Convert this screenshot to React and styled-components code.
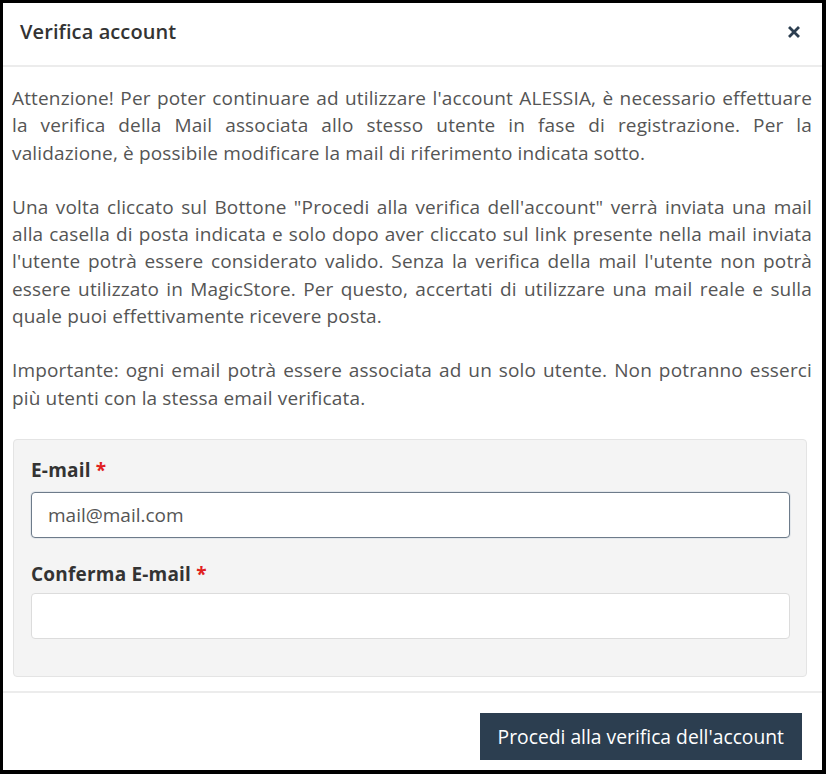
import React from "react";
import styled, { createGlobalStyle } from "styled-components";

const GlobalStyle = createGlobalStyle`
  html, body {
    margin: 0;
    padding: 0;
    background: #000;
  }
  body {
    font-family: "Open Sans", "Liberation Sans", sans-serif;
  }
`;

const Frame = styled.div`
  box-sizing: border-box;
  width: 826px;
  height: 774px;
  border: 3px solid #000;
  border-right-width: 4px;
  border-bottom-width: 4px;
  background: #fff;
  display: flex;
  flex-direction: column;
`;

const Header = styled.div`
  box-sizing: border-box;
  display: flex;
  align-items: center;
  justify-content: space-between;
  height: 64px;
  padding: 0 22px 5px 17px;
  border-bottom: 2px solid #ececec;
`;

const Title = styled.h4`
  margin: 0;
  font-size: 20px;
  font-weight: 600;
  letter-spacing: 0.1px;
  color: #333;
`;

const Close = styled.button`
  border: 0;
  background: none;
  padding: 0;
  display: flex;
  cursor: pointer;
`;

const Body = styled.div`
  padding: 18px 10px 0 9px;
`;

const Text = styled.p`
  margin: 0 0 27px;
  font-size: 19px;
  line-height: 27.3px;
  color: #555;
  text-align: justify;
  letter-spacing: 0.15px;
`;

const Panel = styled.div`
  margin: 1px 5px 0 1px;
  background: #f4f4f4;
  border: 1px solid #e4e4e4;
  border-radius: 4px;
  padding: 17px 16px 37px 17px;
`;

const Field = styled.div`
  display: flex;
  flex-direction: column;
  gap: ${(p) => (p.$last ? "6px" : "9px")};
  margin-bottom: ${(p) => (p.$last ? "0" : "23px")};
`;

const Label = styled.label`
  font-size: 19px;
  line-height: 26px;
  font-weight: 700;
  color: #333;
  letter-spacing: 0.2px;
  span {
    color: #e02020;
  }
`;

const Input = styled.input`
  box-sizing: border-box;
  height: 46px;
  width: 100%;
  border: 1px solid ${(p) => (p.$focused ? "#6d7b8a" : "#dcdcdc")};
  box-shadow: ${(p) => (p.$focused ? "0 0 0 1px #e3e7eb" : "none")};
  border-radius: 4px;
  padding: 0 16px;
  font-family: "Open Sans", "Liberation Sans", sans-serif;
  font-size: 19px;
  color: #555;
  caret-color: #222;
  background: #fff;
  outline: none;
`;

const Footer = styled.div`
  margin-top: 14px;
  border-top: 2px solid #ececec;
  display: flex;
  justify-content: flex-end;
  padding: 20px 20px 0 0;
`;

const PrimaryButton = styled.button`
  height: 47px;
  padding: 0 18px;
  border: 0;
  background: #2c3e50;
  color: #fff;
  font-family: "Open Sans", "Liberation Sans", sans-serif;
  font-size: 19.3px;
  cursor: pointer;
`;

export default function App() {
  return (
    <>
      <GlobalStyle />
      <Frame>
        <Header>
          <Title>Verifica account</Title>
          <Close aria-label="Chiudi">
            <svg width="12" height="12" viewBox="0 0 12 12">
              <path
                d="M2 2 L10 10 M10 2 L2 10"
                stroke="#2c3e50"
                strokeWidth="2.8"
                strokeLinecap="square"
              />
            </svg>
          </Close>
        </Header>
        <Body>
          <Text>
            Attenzione! Per poter continuare ad utilizzare l'account ALESSIA, è
            necessario effettuare la verifica della Mail associata allo stesso
            utente in fase di registrazione. Per la validazione, è possibile
            modificare la mail di riferimento indicata sotto.
          </Text>
          <Text>
            Una volta cliccato sul Bottone "Procedi alla verifica dell'account"
            verrà inviata una mail alla casella di posta indicata e solo dopo
            aver cliccato sul link presente nella mail inviata l'utente potrà
            essere considerato valido. Senza la verifica della mail l'utente non
            potrà essere utilizzato in MagicStore. Per questo, accertati di
            utilizzare una mail reale e sulla quale puoi effettivamente ricevere
            posta.
          </Text>
          <Text>
            Importante: ogni email potrà essere associata ad un solo utente. Non
            potranno esserci più utenti con la stessa email verificata.
          </Text>
          <Panel>
            <Field>
              <Label>
                E-mail <span>*</span>
              </Label>
              <Input $focused autoFocus defaultValue="mail@mail.com" />
            </Field>
            <Field $last>
              <Label>
                Conferma E-mail <span>*</span>
              </Label>
              <Input />
            </Field>
          </Panel>
        </Body>
        <Footer>
          <PrimaryButton>Procedi alla verifica dell'account</PrimaryButton>
        </Footer>
      </Frame>
    </>
  );
}
